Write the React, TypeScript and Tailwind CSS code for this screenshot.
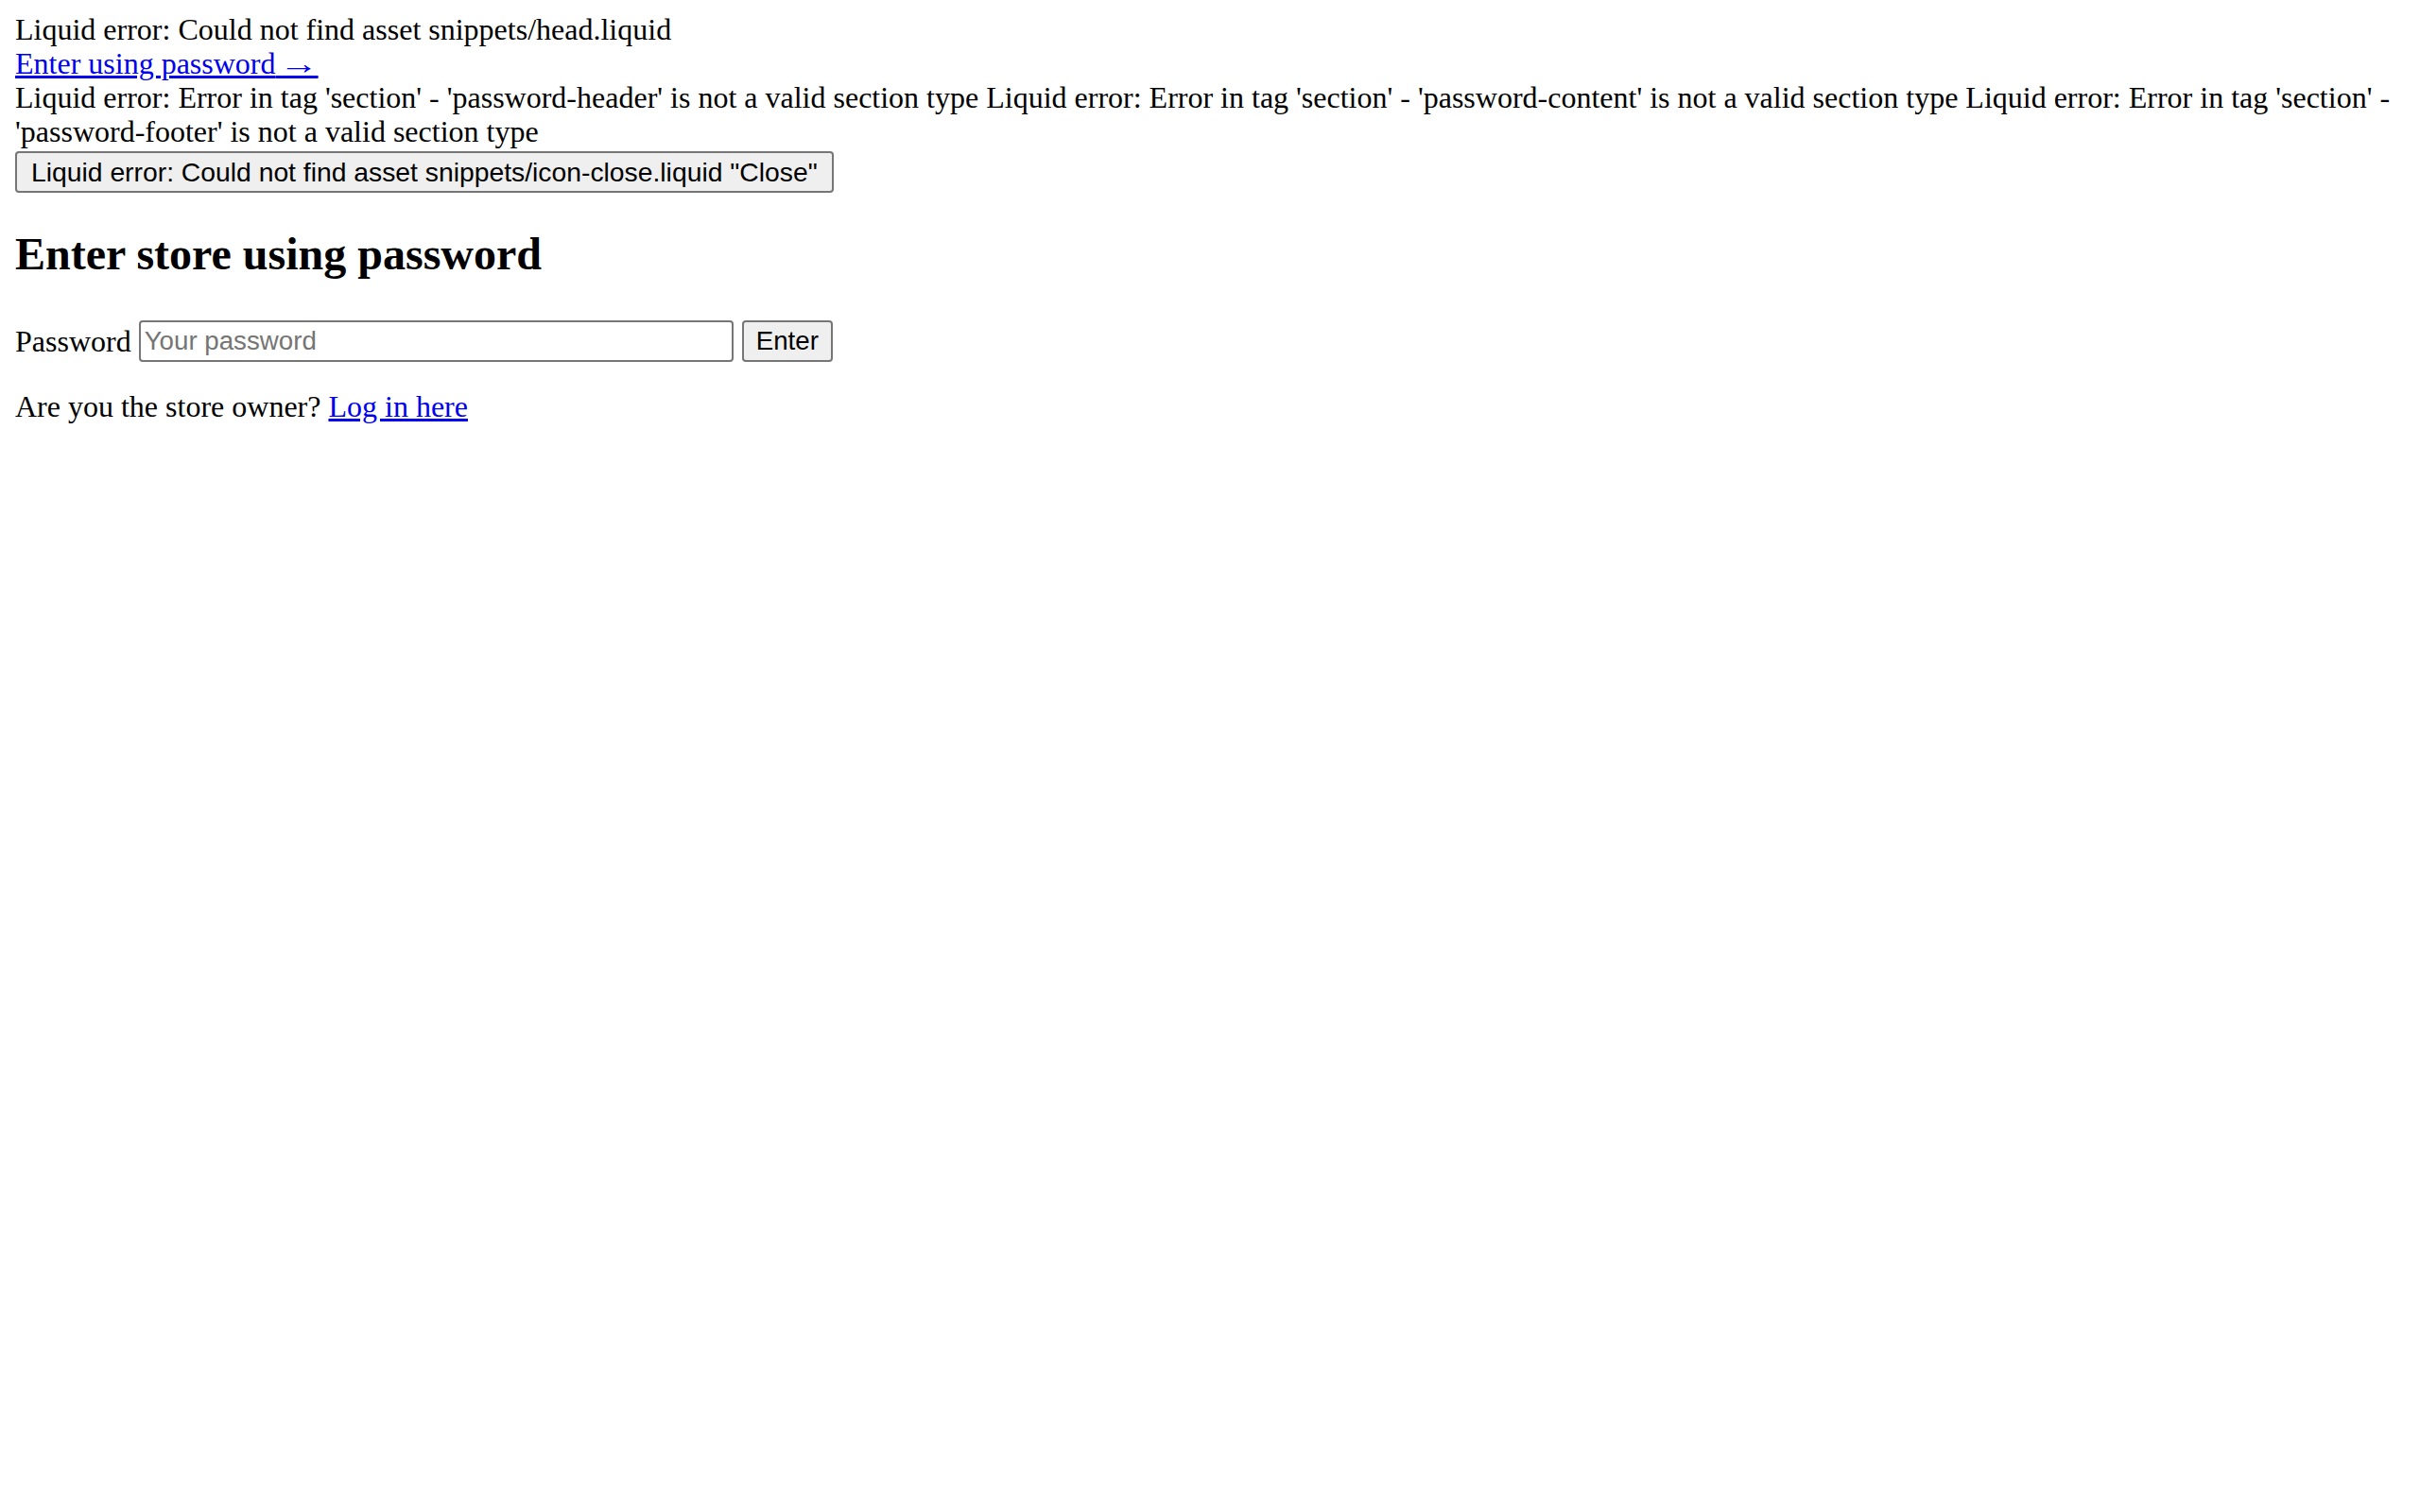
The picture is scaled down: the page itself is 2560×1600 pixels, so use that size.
export default function App() {
  return (
    <div className="min-h-screen bg-white">
      <div className="mx-4 mt-[13px] mb-4 font-['Liberation_Serif',serif] text-[32px] leading-[36px] text-black">
        <div>Liquid error: Could not find asset snippets/head.liquid</div>
        <div>
          <a href="#" className="text-[#0000ee] underline">
            Enter using password{" "}
            <span className="inline-block ml-[-5px] origin-left scale-x-[1.3] underline">→</span>
          </a>
        </div>
        <div>
          Liquid error: Error in tag 'section' - 'password-header' is not a valid section type Liquid error: Error in tag
          'section' - 'password-content' is not a valid section type Liquid error: Error in tag 'section' -
          'password-footer' is not a valid section type
        </div>

        {/* Close button */}
        <button className="mt-[3px] h-[44px] px-[15px] bg-[#efefef] border-2 border-[#767676] rounded-[4px] font-['Liberation_Sans',Arial,sans-serif] text-[28.3px] leading-[normal] text-black">
          Liquid error: Could not find asset snippets/icon-close.liquid "Close"
        </button>

        <h2 className="mt-[37px] mb-[43px] text-[48px] leading-[55px] font-bold">Enter store using password</h2>

        <form className="flex items-center" onSubmit={(e) => e.preventDefault()}>
          <label htmlFor="pw" className="mr-[8px]">Password</label>
          <input
            id="pw"
            type="password"
            placeholder="Your password"
            className="w-[629px] h-[44px] px-[4px] border-2 border-[#767676] rounded-[4px] font-['Liberation_Sans',Arial,sans-serif] text-[27.7px] placeholder:text-[#757575] outline-none"
          />
          <button
            type="submit"
            className="ml-[9px] h-[44px] px-[13px] bg-[#efefef] border-2 border-[#767676] rounded-[4px] font-['Liberation_Sans',Arial,sans-serif] text-[27.7px] leading-[normal] text-black"
          >
            Enter
          </button>
        </form>

        <p className="mt-[29px] mb-[32px]">
          Are you the store owner?{" "}
          <a href="#" className="text-[#0000ee] underline">Log in here</a>
        </p>
      </div>
    </div>
  );
}
